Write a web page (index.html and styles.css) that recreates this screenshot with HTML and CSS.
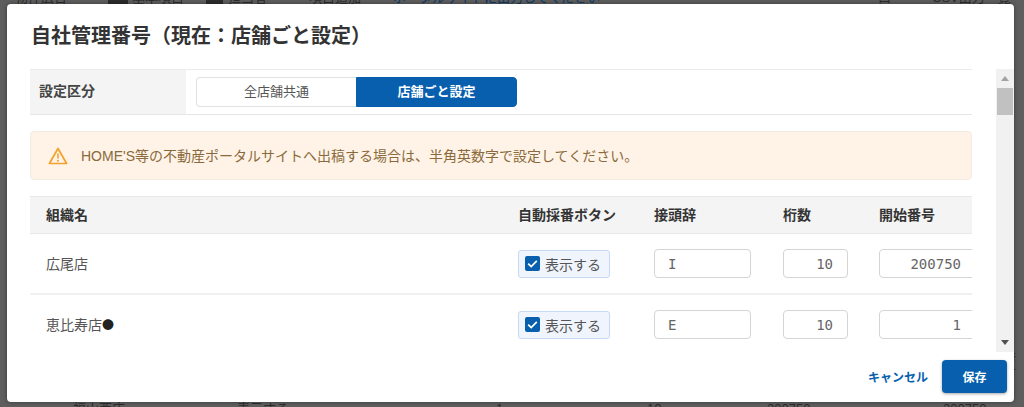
FILE: index.html
```html
<!DOCTYPE html>
<html>
	<head>
		<meta charset="utf-8">
		<title>自社管理番号</title>
		<link rel="stylesheet" href="styles.css">
	</head>
	<body>
		<div class="page-top">
			<span class="top-a">物件広告</span>
			<i class="top-block block-a"></i>
			<span class="top-b">基本項目</span>
			<i class="top-block block-b"></i>
			<span class="top-c">担当者</span>
			<span class="top-d">項目追加</span>
			<span class="top-link">ポータルサイトに出力してください</span>
			<span class="top-e">口</span>
			<span class="top-f">CSV出力一覧</span>
		</div>
		<div class="page-side">番号</div>
		<div class="page-bottom">
			<span class="bot-a">福山西店</span>
			<span class="bot-b">表示する</span>
			<span class="bot-f">1</span>
			<span class="bot-c">10</span>
			<span class="bot-d">200750</span>
			<span class="bot-e">200750</span>
		</div>

		<div class="modal">
			<h1 class="modal-title">自社管理番号（現在：店舗ごと設定）</h1>
			<div class="modal-main">
				<div class="scroll-body">
					<div class="setting-row">
						<div class="setting-label">設定区分</div>
						<div class="setting-value">
							<div class="toggle">
								<span class="toggle-item">全店舗共通</span>
								<span class="toggle-item current">店舗ごと設定</span>
							</div>
						</div>
					</div>

					<div class="notice">
						<svg class="notice-icon" width="20" height="18" viewBox="0 0 20 18">
							<path d="M10 1.5L18.6 16.5H1.4Z" fill="none" stroke="#f5a02c" stroke-width="1.7" stroke-linejoin="round"/>
							<path d="M10 6.5V11.5" stroke="#f5a02c" stroke-width="1.6"/>
							<circle cx="10" cy="13.8" r="1" fill="#f5a02c"/>
						</svg>
						<span class="notice-text">HOME'S等の不動産ポータルサイトへ出稿する場合は、半角英数字で設定してください。</span>
					</div>

					<div class="shop-table">
						<div class="table-row table-head">
							<div class="col-name">組織名</div>
							<div class="col-check">自動採番ボタン</div>
							<div class="col-prefix">接頭辞</div>
							<div class="col-digits">桁数</div>
							<div class="col-start">開始番号</div>
						</div>
						<div class="table-row">
							<div class="col-name">広尾店</div>
							<div class="col-check">
								<label class="check-box">
									<svg class="check-icon" width="15" height="15" viewBox="0 0 15 15">
										<rect width="15" height="15" rx="2" fill="#075fae"/>
										<path d="M3.2 7.6L6.2 10.6L11.8 4.8" fill="none" stroke="#fff" stroke-width="1.7"/>
									</svg>
									表示する
								</label>
							</div>
							<div class="col-prefix"><input class="text-input input-prefix" value="I"></div>
							<div class="col-digits"><input class="text-input input-digits" value="10"></div>
							<div class="col-start"><input class="text-input input-start" value="200750"></div>
						</div>
						<div class="table-row">
							<div class="col-name">恵比寿店<span class="mark">●</span></div>
							<div class="col-check">
								<label class="check-box">
									<svg class="check-icon" width="15" height="15" viewBox="0 0 15 15">
										<rect width="15" height="15" rx="2" fill="#075fae"/>
										<path d="M3.2 7.6L6.2 10.6L11.8 4.8" fill="none" stroke="#fff" stroke-width="1.7"/>
									</svg>
									表示する
								</label>
							</div>
							<div class="col-prefix"><input class="text-input input-prefix" value="E"></div>
							<div class="col-digits"><input class="text-input input-digits" value="10"></div>
							<div class="col-start"><input class="text-input input-start" value="1"></div>
						</div>
					</div>
				</div>

				<div class="scrollbar">
					<span class="arrow-up"></span>
					<span class="thumb"></span>
					<span class="arrow-down"></span>
				</div>
			</div>
			<div class="modal-foot">
				<a class="cancel" href="#">キャンセル</a>
				<button class="save">保存</button>
			</div>
		</div>
	</body>
</html>
```

FILE: styles.css
```css
* {
	margin: 0;
	padding: 0;
	box-sizing: border-box;
}

html,
body {
	height: 407px;
	overflow: hidden;
}

body {
	position: relative;
	background-color: #5e5e5e;
	font-family: "Liberation Sans", "Noto Sans CJK JP", sans-serif;
	font-size: 14px;
	color: #555;
	padding: 4px 10px 5px 7px;
}

/* page behind the overlay */
.page-top,
.page-bottom {
	position: absolute;
	left: 0;
	width: 100%;
	height: 14px;
	color: #2c2c2c;
	font-size: 13px;
	line-height: 14px;
	white-space: nowrap;
}

.page-top {
	top: -9px;
}

.page-bottom {
	bottom: -9px;
}

.page-top span,
.page-bottom span {
	position: absolute;
	top: 0;
}

.top-a { left: 15px; }
.top-b { left: 132px; }
.top-c { left: 228px; }
.top-d { left: 309px; }
.top-e { left: 878px; }
.top-f { left: 932px; }
.top-link { left: 393px; color: #0a3a66; }

.top-block {
	position: absolute;
	top: 8px;
	height: 6px;
	background-color: #2c2c2c;
}

.block-a { left: 108px; width: 20px; }
.block-b { left: 206px; width: 17px; }

.bot-a { left: 73px; }
.bot-b { left: 237px; }
.bot-f { left: 496px; }
.bot-c { left: 647px; }
.bot-d { left: 767px; }
.bot-e { left: 943px; }

.page-side {
	position: absolute;
	top: 349px;
	left: 1003px;
	font-size: 13px;
	line-height: 14px;
	color: #2c2c2c;
}

.modal {
	position: relative;
	display: flex;
	flex-direction: column;
	width: 1007px;
	height: 398px;
	background-color: #fff;
	border-radius: 4px;
	box-shadow: 0 0 4px rgba(0, 0, 0, 0.4);
}

.modal-title {
	height: 65px;
	padding: 18px 0 0 24px;
	font-size: 20px;
	line-height: 28px;
	font-weight: bold;
	color: #333;
}

.modal-main {
	display: flex;
	height: 283px;
	padding-left: 23px;
}

.scroll-body {
	width: 942px;
	height: 283px;
	overflow: hidden;
}

.setting-row {
	display: flex;
	height: 46px;
	border-top: 1px solid #ebebeb;
	border-bottom: 1px solid #e6e6e6;
}

.setting-label {
	width: 156px;
	padding-left: 9px;
	background-color: #f4f4f4;
	font-weight: bold;
	line-height: 43px;
	color: #444;
}

.setting-value {
	flex: 1;
	padding: 7px 0 0 10px;
}

.toggle {
	display: flex;
	width: 321px;
	height: 30px;
	font-size: 13px;
}

.toggle-item {
	width: 160px;
	border: 1px solid #e2e2e2;
	border-right: 0;
	border-radius: 4px 0 0 4px;
	text-align: center;
	line-height: 27px;
	color: #555;
}

.toggle-item.current {
	width: 161px;
	border: 1px solid #075fae;
	border-radius: 0 4px 4px 0;
	background-color: #075fae;
	color: #fff;
	font-weight: bold;
}

.notice {
	display: flex;
	align-items: center;
	height: 49px;
	margin-top: 16px;
	padding: 0 0 2px 17px;
	background-color: #fef3e6;
	border: 1px solid #f2ebe2;
	border-radius: 4px;
	color: #8a6a3c;
}

.notice-icon {
	margin: 2px 13px 0 0;
}

.shop-table {
	margin-top: 16px;
}

.table-row {
	display: flex;
	align-items: center;
	height: 61px;
	border-bottom: 2px solid #f0f0f0;
}

.table-head {
	height: 38px;
	padding-bottom: 3px;
	background-color: #f4f4f4;
	border-top: 1px solid #e8e8e8;
	border-bottom: 1px solid #e8e8e8;
	font-weight: bold;
	color: #333;
}

.col-name {
	width: 488px;
	padding-left: 16px;
	padding-bottom: 2px;
}

.table-head .col-name {
	padding-bottom: 0;
}

.mark {
	font-family: "Noto Sans CJK JP", sans-serif;
	font-size: 12px;
	color: #222;
}

.col-check {
	width: 136px;
}

.col-prefix {
	width: 129px;
}

.col-digits {
	width: 96px;
}

.col-start {
	width: 93px;
	overflow: hidden;
}

.check-box {
	display: flex;
	align-items: center;
	width: 92px;
	height: 28px;
	padding-left: 6px;
	background-color: #f0f5fd;
	border: 1px solid #c6daf5;
	border-radius: 3px;
	font-size: 14px;
	color: #555;
}

.check-icon {
	margin-right: 5px;
}

.text-input {
	display: block;
	height: 29px;
	border: 1px solid #d4d4d4;
	border-radius: 4px;
	background-color: #fff;
	font-family: "DejaVu Sans Mono", "Noto Sans CJK JP", monospace;
	font-size: 14px;
	color: #666;
	outline: none;
}

.input-prefix {
	width: 97px;
	padding-left: 13px;
}

.input-digits {
	width: 65px;
	padding-right: 14px;
	text-align: right;
}

.input-start {
	width: 110px;
	padding-right: 27px;
	text-align: right;
}

.scrollbar {
	display: flex;
	flex-direction: column;
	align-items: center;
	width: 18px;
	height: 283px;
	margin-left: 24px;
	background-color: #f1f1f1;
}

.arrow-up {
	width: 0;
	height: 0;
	margin-top: 7px;
	border-left: 4px solid transparent;
	border-right: 4px solid transparent;
	border-bottom: 5px solid #a3a3a3;
}

.thumb {
	width: 16px;
	height: 27px;
	margin-top: 7px;
	background-color: #c1c1c1;
}

.arrow-down {
	width: 0;
	height: 0;
	margin-top: auto;
	margin-bottom: 7px;
	border-left: 4px solid transparent;
	border-right: 4px solid transparent;
	border-top: 5px solid #505050;
}

.modal-foot {
	display: flex;
	justify-content: flex-end;
	align-items: center;
	padding: 8px 7px 0 0;
}

.cancel {
	margin-right: 14px;
	font-weight: bold;
	font-size: 12px;
	color: #075fae;
	text-decoration: none;
}

.save {
	width: 65px;
	height: 33px;
	background-color: #075fae;
	border: 0;
	border-radius: 4px;
	box-shadow: 0 1px 3px rgba(0, 0, 0, 0.35);
	font-family: inherit;
	font-size: 12px;
	font-weight: bold;
	color: #fff;
}
```
